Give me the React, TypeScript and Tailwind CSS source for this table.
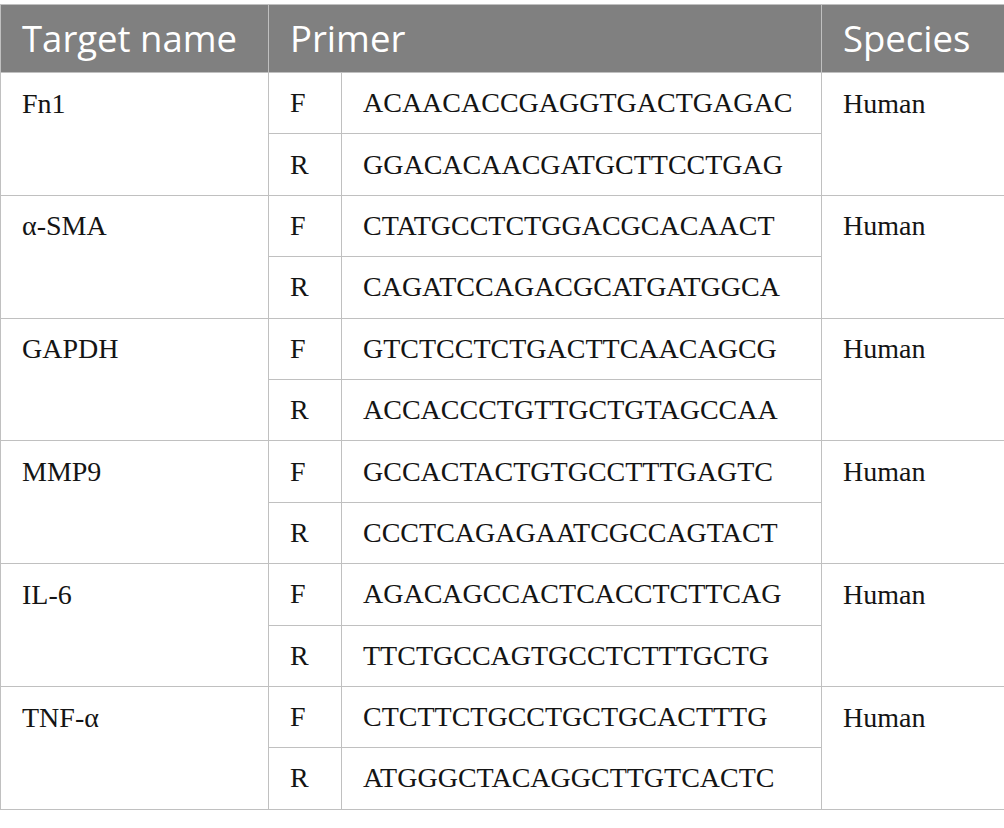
const rows = [
  { target: 'Fn1', f: 'ACAACACCGAGGTGACTGAGAC', r: 'GGACACAACGATGCTTCCTGAG', species: 'Human' },
  { target: 'α-SMA', f: 'CTATGCCTCTGGACGCACAACT', r: 'CAGATCCAGACGCATGATGGCA', species: 'Human' },
  { target: 'GAPDH', f: 'GTCTCCTCTGACTTCAACAGCG', r: 'ACCACCCTGTTGCTGTAGCCAA', species: 'Human' },
  { target: 'MMP9', f: 'GCCACTACTGTGCCTTTGAGTC', r: 'CCCTCAGAGAATCGCCAGTACT', species: 'Human' },
  { target: 'IL-6', f: 'AGACAGCCACTCACCTCTTCAG', r: 'TTCTGCCAGTGCCTCTTTGCTG', species: 'Human' },
  { target: 'TNF-α', f: 'CTCTTCTGCCTGCTGCACTTTG', r: 'ATGGGCTACAGGCTTGTCACTC', species: 'Human' },
]

const cell = 'border border-[#c0c0c0] pl-[21px] pr-2 text-left'
const body = 'h-[61.4px] align-middle'

export default function App() {
  return (
    <div className="w-[1004px] bg-white pt-1">
      <table className="w-[1004px] border-collapse table-fixed font-['Liberation_Serif',serif] text-[28px] text-[#141414]">
        <colgroup>
          <col className="w-[268px]" />
          <col className="w-[73px]" />
          <col className="w-[480px]" />
          <col className="w-[183px]" />
        </colgroup>
        <thead>
          <tr className="h-[68px] bg-[#808080] text-white font-['Open_Sans',sans-serif] text-[36.5px]">
            <th className={`${cell} font-normal`}>Target name</th>
            <th colSpan={2} className={`${cell} font-normal`}>Primer</th>
            <th className={`${cell} font-normal`}>Species</th>
          </tr>
        </thead>
        <tbody>
          {rows.map((row) => (
            <>
              <tr key={row.target + '-f'}>
                <td rowSpan={2} className={`${cell} align-top`}>
                  <div className="h-[61.4px] flex items-center">{row.target}</div>
                </td>
                <td className={`${cell} ${body}`}>F</td>
                <td className={`${cell} ${body}`}>{row.f}</td>
                <td rowSpan={2} className={`${cell} align-top`}>
                  <div className="h-[61.4px] flex items-center">{row.species}</div>
                </td>
              </tr>
              <tr key={row.target + '-r'}>
                <td className={`${cell} ${body}`}>R</td>
                <td className={`${cell} ${body}`}>{row.r}</td>
              </tr>
            </>
          ))}
        </tbody>
      </table>
    </div>
  )
}
